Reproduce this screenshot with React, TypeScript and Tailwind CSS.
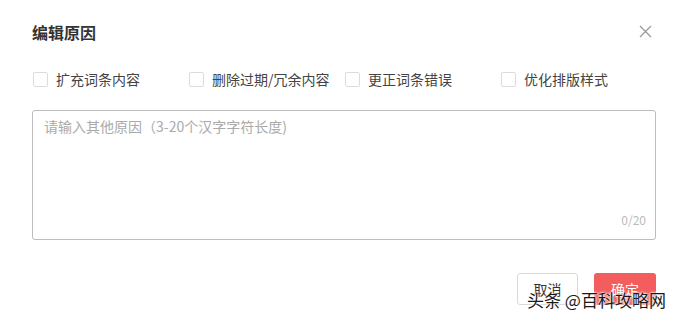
import React from "react";

const options = ["扩充词条内容", "删除过期/冗余内容", "更正词条错误", "优化排版样式"];

export default function App() {
  return (
    <div
      className="relative w-[679px] h-[320px] overflow-hidden bg-white text-[#333]"
      style={{ fontFamily: '"Noto Sans CJK SC", "Liberation Sans", sans-serif' }}
    >
      <div className="pl-8 pr-[27px] pt-[22px]">
        <div className="flex items-center justify-between h-5">
          <div className="text-[16px] leading-5 font-bold text-[#333]">编辑原因</div>
          <svg width="13" height="13" viewBox="0 0 13 13" className="mb-[2px]">
            <path d="M1 1 L12 12 M12 1 L1 12" stroke="#9a9a9a" strokeWidth="1.3" fill="none" />
          </svg>
        </div>
      </div>
      <div className="px-8">
        <div className="mt-[27px] grid grid-cols-4 w-[624px] h-5">
          {options.map((o) => (
            <label key={o} className="flex items-center pl-px">
              <span className="w-[15px] h-[15px] border border-[#dcdcdc] rounded-[2px] bg-white shrink-0" />
              <span className="ml-[8px] text-[14px] leading-5 text-[#444]">{o}</span>
            </label>
          ))}
        </div>
        <div className="mt-[21px] relative w-[624px] h-[130px] border border-[#bdbdbd] rounded-[3px]">
          <div className="pl-[11px] pt-[5px] text-[14px] leading-5 text-[#aaa]">
            请输入其他原因（3-20个汉字字符长度)
          </div>
          <div className="absolute right-[9px] bottom-[11px] text-[12px] leading-4 text-[#bbb]">0/20</div>
        </div>
        <div className="mt-[33px] flex justify-end gap-[16px] w-[624px]">
          <button className="w-[61px] h-8 border border-[#d9d9d9] rounded-[3px] bg-white text-[14px] text-[#333]">
            取消
          </button>
          <button className="w-[62px] h-8 rounded-[3px] bg-[#f45d5d] text-[14px] text-white">确定</button>
        </div>
      </div>
      <div
        className="absolute left-[527px] top-[289px] text-[17px] leading-[22px] text-[#1a1a1a] whitespace-nowrap"
        style={{ textShadow: "0 0 2px #fff, 0 0 2px #fff, 0 0 3px #fff" }}
      >
        头条 @百科攻略网
      </div>
    </div>
  );
}
